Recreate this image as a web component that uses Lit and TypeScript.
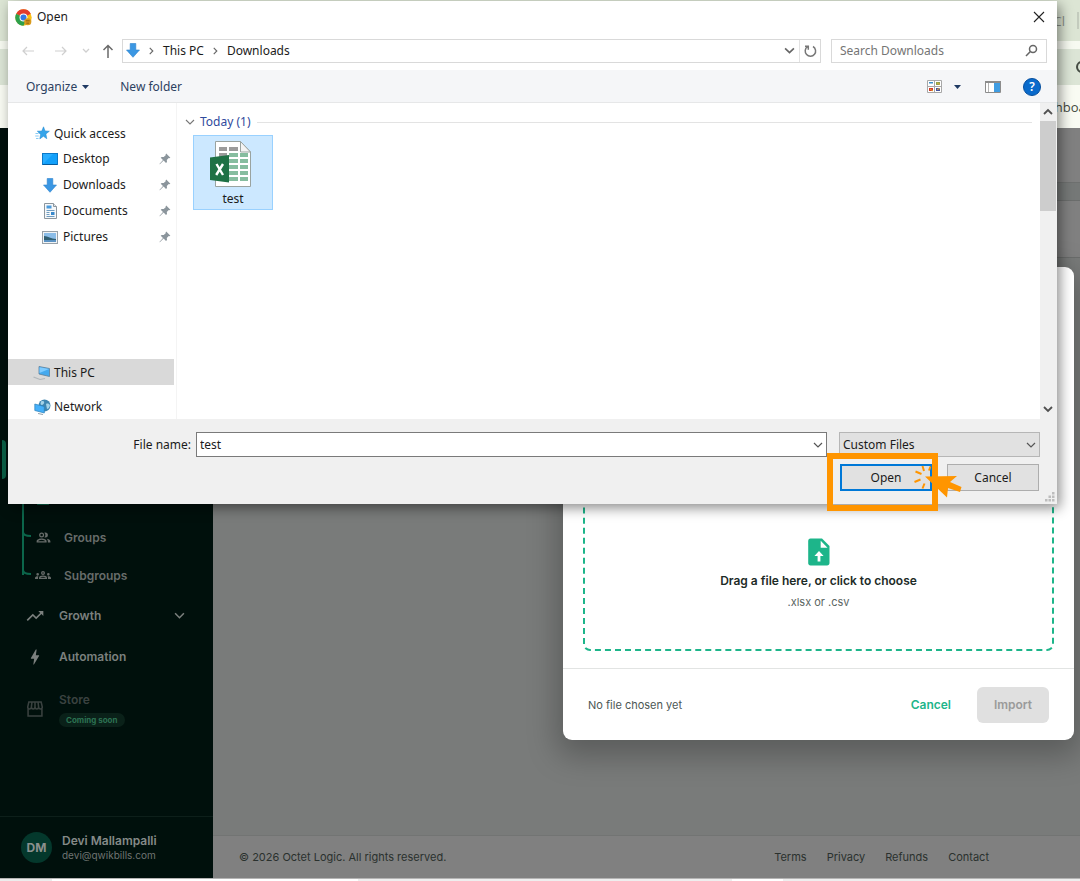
import { LitElement, html, css } from "lit";
import { customElement } from "lit/decorators.js";

const chevronDown = (size = 10, w = 1.2) => html`<svg width=${size} height=${size} viewBox="0 0 10 10" fill="none" stroke="currentColor" stroke-width=${w}><path d="M1 3l4 4 4-4" /></svg>`;
const chevronUp = () => html`<svg width="10" height="10" viewBox="0 0 10 10" fill="none" stroke="currentColor" stroke-width="1.8"><path d="M1 7l4-4 4 4" /></svg>`;
const chevronRight = () => html`<svg width="7" height="10" viewBox="0 0 8 10" fill="none" stroke="#666" stroke-width="1.3"><path d="M2 1.500l3.500 3.500L2 8.500" /></svg>`;
const downArrow = () => html`<svg width="14" height="15" viewBox="0 0 14 15"><path d="M4.200.5h5.600v6.500h3.700L7 14.300.5 7h3.700z" fill="#3b97e3" stroke="#2c83cf" stroke-width=".6" /></svg>`;
const pin = () => html`<svg width="12" height="12" viewBox="0 0 12 12" fill="#8b959c"><path d="M7.200.6l4.200 4.200-1.200.4-.5-.1-1.900 1.900.2 2-1 .9-2.400-2.400L.8 11.300.4 11l3.600-4L1.700 4.800l1-.9 2 .2 2-1.900-.1-.6z" /></svg>`;

const icons: Record<string, unknown> = {
  star: html`<svg width="15" height="15" viewBox="0 0 15 15"><path d="M8.500.8l1.600 4.100 4.300.3-3.500 2.700.9 4.800-3.400-2.400-3.600 2.600.8-4.500L2.300 5.200l4.500-.2z" fill="#35a4ea" stroke="#1f86cf" stroke-width=".5" /><path d="M.5 7.500h3M.2 10h3.500M1 12.500h2.500" stroke="#7cc4f2" stroke-width=".9" /></svg>`,
  desktop: html`<svg width="16" height="13" viewBox="0 0 16 13"><rect x=".5" y=".5" width="15" height="11" fill="#12a0fa" stroke="#0b78c8" /><path d="M1 11L11 1H1z" fill="#29adff" /><path d="M1 11.500h14" stroke="#075b9c" /></svg>`,
  downloads: downArrow(),
  documents: html`<svg width="13" height="16" viewBox="0 0 13 16"><path d="M.5.5h9l3 3v12H.5z" fill="#f6f8fa" stroke="#8c969e" /><path d="M9.500.5v3h3" fill="#dfe5ea" stroke="#8c969e" /><path d="M2.500 2.500h5v3h-5z" fill="#4a9bdd" /><path d="M2.500 7.500h8M2.500 9.500h3M2.500 11.500h3M2.500 13.500h8" stroke="#6f9cc0" /><path d="M7 9h3.500v3H7z" fill="#3989cc" /></svg>`,
  pictures: html`<svg width="16" height="13" viewBox="0 0 16 13"><rect x=".5" y=".5" width="15" height="12" fill="#f1f3f5" stroke="#98a1a8" /><path d="M2 2h12v9H2z" fill="#8bbde8" /><path d="M2 5c4 0 7 3 12 3v3H2z" fill="#315f72" /><path d="M2 9h12v2H2z" fill="#5b93c4" /></svg>`,
  pc: html`<svg width="18" height="16" viewBox="0 0 18 16"><path d="M6 1.500l10.500 2v8L6 9z" fill="#45a9ee" stroke="#5c7f99" stroke-width=".8" /><path d="M6.500 2.200l9.500 1.800-9.500 4z" fill="#7ecbff" /><path d="M.5 12l6.500 2.500 5-1" stroke="#b0b6ba" stroke-width="1.200" fill="none" /></svg>`,
  network: html`<svg width="17" height="16" viewBox="0 0 17 16"><circle cx="10.500" cy="6.500" r="6" fill="#3f86b0" /><path d="M7 2.500c3-1.500 4 1 2.500 2.500s-2 1-3 0zM12 5c2-1 3 0 4 1-.5 3-2 4-3 4z" fill="#a5d3e8" /><path d="M.8 5l9.500 2.500v6.500L.8 11.500z" fill="#45b0fa" stroke="#2b7fb9" stroke-width=".7" /><path d="M4 14.500l5 1" stroke="#8fa0ab" /></svg>`,
};

const people = html`<svg width="15" height="15" viewBox="0 0 24 24" fill="currentColor"><path d="M9 12a4 4 0 1 0 0-8 4 4 0 0 0 0 8zm0-6a2 2 0 1 1 0 4 2 2 0 0 1 0-4zM9 13.500c-3 0-8 1.400-8 4.300V20h16v-2.200c0-2.900-5-4.300-8-4.300zM3.200 18c.6-1 3.300-2.300 5.800-2.300s5.200 1.200 5.800 2.300zM15 12a4 4 0 1 0 0-8c-.6 0-1.100.1-1.600.3a5.500 5.500 0 0 1 0 7.400c.5.200 1 .3 1.600.3zM17 13.800c1.300 1 2 2.300 2 4V20h4v-2.200c0-2.300-3.200-3.600-6-4z" /></svg>`;
const groups = html`<svg width="16" height="16" viewBox="0 0 24 24" fill="currentColor"><path d="M4 13a2 2 0 1 0 0-4 2 2 0 0 0 0 4zm1.100 1.100A6.300 6.300 0 0 0 4 14c-1 0-1.900.2-2.800.6A2 2 0 0 0 0 16.400V18h4.500v-1.600c0-.8.200-1.600.6-2.300zM20 13a2 2 0 1 0 0-4 2 2 0 0 0 0 4zm4 3.400a2 2 0 0 0-1.200-1.800c-.9-.4-1.800-.6-2.800-.6-.4 0-.8 0-1.100.1.400.7.600 1.500.6 2.300V18H24zm-7.800-2.800c-1.200-.5-2.600-.9-4.200-.9s-3 .4-4.200.9A3 3 0 0 0 6 16.400V18h12v-1.600a3 3 0 0 0-1.800-2.800zM8.100 16c.1-.2.100-.4.900-.7a8 8 0 0 1 6 0c.8.300.8.500.9.700zM12 6a3 3 0 1 0 0 6 3 3 0 0 0 0-6zm0 4a1 1 0 1 1 0-2 1 1 0 0 1 0 2z" /></svg>`;
const trend = html`<svg width="20" height="20" viewBox="0 0 24 24" fill="currentColor"><path d="M16 6l2.300 2.300-4.900 4.900-4-4L2 16.600 3.400 18l6-6 4 4 6.300-6.300L22 12V6z" /></svg>`;
const bolt = html`<svg width="20" height="20" viewBox="0 0 24 24" fill="currentColor"><path d="M10.700 21H10l1-7H7.500c-.6 0-.6-.3-.4-.7L13 3h1l-1 7h3.500c.5 0 .6.300.5.600z" /></svg>`;
const store = html`<svg width="20" height="20" viewBox="-1 -1 26 26" fill="none" stroke="currentColor" stroke-width="2"><path d="M3 12v9h18v-9M4 3h16l1.500 6.500c0 1.500-1 2.500-2.300 2.500S17 11 16.700 9.500c0 1.500-1 2.500-2.300 2.500S12 11 12 9.500c0 1.500-1 2.500-2.300 2.500S7.300 11 7.300 9.500C7 11 6 12 4.800 12S2.500 11 2.500 9.500zM7.300 9.500L8 3M12 9.500V3M16.700 9.500L16 3" /></svg>`;

/* Web page behind the dialogs: browser strip, sidebar, content, footer. */
@customElement("backdrop-page")
class BackdropPage extends LitElement {
  static styles = css`
    :host { display: flex; flex-direction: column; min-height: 100vh; font-family: Inter, sans-serif; }
    * { box-sizing: border-box; }
    .tabs { height: 41px; background: #dce5d4; display: flex; justify-content: flex-end; align-items: center; gap: 12px; padding-right: 1px; font: 13px "Open Sans", sans-serif; color: #8a9088; }
    .tick { width: 2px; height: 17px; background: #c3cbbd; }
    .address { height: 44px; background: #dce5d6; border-top: 8px solid #f7faf1; display: flex; justify-content: flex-end; align-items: center; overflow: hidden; }
    .round { width: 12px; height: 12px; border: 2px solid #444b42; border-radius: 50%; margin-right: -8px; }
    .marks { height: 43px; background: #f9fbf3; display: flex; justify-content: flex-end; align-items: center; font: 13px "Open Sans", sans-serif; color: #444a40; overflow: hidden; }
    .marks span { margin-right: -19px; }
    .work { flex: 1; display: flex; }
    .side { width: 213px; background: #00100c; color: #7b807e; display: flex; flex-direction: column; }
    nav { flex: 1; display: flex; flex-direction: column; justify-content: flex-end; padding-bottom: 75px; font-size: 12px; font-weight: 600; }
    .active { height: 40px; padding: 0 2px; }
    .marker { display: block; width: 4px; height: 39px; border-radius: 0 4px 4px 0; background: #0a5f46; }
    .sub { height: 38px; display: flex; align-items: center; color: #676c6a; text-decoration: none; margin-left: 22px; }
    .elbow { width: 12px; height: 38px; display: block; color: #0b664b; }
    .sub .glyph { width: 18px; display: flex; justify-content: center; }
    .sub .name { margin-left: 12px; }
    .green { color: #0b664b; }
    .item { height: 41px; display: flex; align-items: center; color: inherit; text-decoration: none; padding: 0 28px 0 25px; }
    .subs { margin-bottom: 1px; }
    .item .name { margin-left: 14px; flex: 1; }
    .shop { height: 64px; color: #3a4240; }
    .shop .name { display: flex; flex-direction: column; align-items: flex-start; gap: 6px; }
    .soon { font-size: 8px; font-weight: 700; line-height: 14px; border-radius: 7px; background: #0a2119; color: #2c7252; padding: 0 7px; }
    .user { height: 62px; border-top: 1px solid #0d1f1a; display: flex; align-items: center; gap: 10px; padding-left: 21px; }
    .avatar { width: 31px; height: 31px; border-radius: 50%; background: #04382c; display: grid; place-items: center; font-size: 12px; font-weight: 700; color: #8b908e; }
    .who { font-size: 12px; font-weight: 600; line-height: 14px; color: #858a88; }
    .mail { font-size: 10px; line-height: 14px; color: #6f7472; }
    .main { flex: 1; display: flex; flex-direction: column; background: #797b7a; }
    .head { height: 55px; background: #808080; border-bottom: 1px solid #6e706f; }
    .gap { height: 18px; background: #757877; border-bottom: 1px solid #6b6d6c; }
    .panel { height: 57px; background: #808080; border-bottom: 1px solid #6b6d6c; }
    .fill { flex: 1; }
    footer { height: 43px; background: #808080; border-top: 1px solid #727473; display: flex; align-items: center; justify-content: space-between; padding: 0 91px 0 26px; font-size: 11px; color: #2a312e; }
    footer div { display: flex; gap: 20px; }
    footer a { color: inherit; text-decoration: none; }
    .bar { height: 3px; border-top: 1px solid #b4b4b4; background: linear-gradient(90deg, #ececec 52px, #fff 52px 358px, #eee 358px 732px, #fff 732px 783px, #eee 783px); }
  `;
  sub(glyph: unknown, name: string, last = false) {
    return html`<a class="sub" href="#" aria-label=${name || "Clients"}>
      <svg class="elbow" viewBox="0 0 12 38" fill="none" stroke="currentColor" stroke-width="2"><path d=${last ? "M1 0v19" : "M1 0v38"} /><path d="M1 14c0 3 3 4 8 4" /></svg>
      <span class="glyph">${glyph}</span>${name ? html`<span class="name">${name}</span>` : ""}</a>`;
  }
  render() {
    return html`
      <div class="tabs"><span>Cl</span><i class="tick"></i></div>
      <div class="address"><i class="round"></i></div>
      <div class="marks"><span>hboard</span></div>
      <div class="work">
        <aside class="side">
          <nav>
            <div class="active"><i class="marker"></i></div>
            <div class="subs">
              ${this.sub(html`<svg class="green" width="12" height="12" viewBox="0 0 12 12" fill="currentColor"><circle cx="6" cy="3" r="3" /><path d="M0 12c0-6 12-6 12 0z" /></svg>`, "")}
              ${this.sub(people, "Groups")}
              ${this.sub(groups, "Subgroups", true)}
            </div>
            <a class="item" href="#">${trend}<span class="name">Growth</span>${chevronDown(11, 1.4)}</a>
            <a class="item" href="#">${bolt}<span class="name">Automation</span></a>
            <a class="item shop" href="#">${store}<span class="name">Store<span class="soon">Coming soon</span></span></a>
          </nav>
          <div class="user"><span class="avatar">DM</span><div><div class="who">Devi Mallampalli</div><div class="mail">devi@qwikbills.com</div></div></div>
        </aside>
        <div class="main">
          <div class="head"></div><div class="gap"></div><div class="panel"></div>
          <div class="fill"></div>
          <footer><span>© 2026 Octet Logic. All rights reserved.</span>
            <div><a href="#">Terms</a><a href="#">Privacy</a><a href="#">Refunds</a><a href="#">Contact</a></div></footer>
        </div>
      </div>
      <div class="bar"></div>`;
  }
}

/* Import card with the drop zone. */
@customElement("import-card")
class ImportCard extends LitElement {
  static styles = css`
    :host { display: block; background: #fff; border-radius: 9px; box-shadow: 0 10px 30px 6px rgba(0, 0, 0, 0.25); font-family: Inter, sans-serif; }
    * { box-sizing: border-box; }
    .body { padding: 228px 20px 17px; }
    .zone { display: flex; flex-direction: column; align-items: center; border: 2px dashed #1db58a; border-radius: 7px; padding: 41px 0 38px; }
    .title { margin-top: 5px; font-size: 12px; font-weight: 600; line-height: 20px; color: #1d2b27; }
    .kinds { margin-top: 2px; font-size: 11px; line-height: 18px; color: #5a6562; }
    .foot { border-top: 1px solid #e2e4e3; height: 72px; display: flex; align-items: center; padding: 0 25px; }
    .state { flex: 1; font-size: 11px; color: #4c5754; }
    button { font: 600 12px Inter, sans-serif; height: 36px; border: 0; border-radius: 6px; background: none; }
    .cancel { color: #1db58a; padding: 0 10px; margin-right: 16px; }
    .import { background: #e0e0e0; color: #9a9a9a; width: 72px; padding: 0; }
  `;
  render() {
    return html`
      <div class="body"><div class="zone">
        <svg width="22" height="28" viewBox="0 0 22 28"><path d="M2.500.5H14l7.500 7.500v17c0 1.400-1 2.500-2.500 2.500H2.500C1 27.500.2 26.400.2 25V3C.2 1.500 1 .5 2.500.5z" fill="#1db58a" /><path d="M12.700 2.700v7h6.800z" fill="#fff" /><path d="M11 13l-4.600 5h3.200v5.500h2.800V18h3.200z" fill="#fff" /></svg>
        <div class="title">Drag a file here, or click to choose</div>
        <div class="kinds">.xlsx or .csv</div>
      </div></div>
      <div class="foot"><span class="state">No file chosen yet</span><button class="cancel">Cancel</button><button class="import" disabled>Import</button></div>`;
  }
}

/* System file picker. */
@customElement("file-dialog")
class FileDialog extends LitElement {
  static styles = css`
    :host { display: block; background: #fff; box-shadow: 3px 4px 12px rgba(0, 0, 0, 0.45); font: 12px/16px "Noto Sans", "Open Sans", sans-serif; color: #1b1b1b; }
    * { box-sizing: border-box; }
    svg { display: block; flex: none; }
    button, input, select { font: inherit; color: inherit; margin: 0; border-radius: 0; }
    .plain { border: 0; background: none; padding: 0; display: flex; align-items: center; }
    .caption { height: 32px; display: flex; align-items: center; gap: 5px; padding: 0 12px 0 7px; }
    .caption b { flex: 1; font-weight: 400; }
    .where { height: 37px; display: flex; align-items: center; padding: 0 10px 2px 14px; }
    .arrows { display: flex; align-items: center; width: 100px; }
    .path { flex: 1; height: 24px; border: 1px solid #d9d9d9; display: flex; align-items: center; padding-left: 3px; color: #1b1b1b; }
    .path .crumb { margin: 0 8px; }
    .path .spring { flex: 1; }
    .path .more { color: #666; }
    .refresh { width: 21px; height: 22px; border-left: 1px solid #e2e2e2; justify-content: center; margin-left: 4px; }
    .search { width: 216px; height: 24px; border: 1px solid #d9d9d9; margin-left: 10px; display: flex; align-items: center; padding: 0 8px; }
    .search input { flex: 1; min-width: 0; border: 0; padding: 0; outline: 0; background: none; }
    .search input::placeholder { color: #757575; opacity: 1; }
    .tools { height: 33px; background: #f5f6f8; border-bottom: 1px solid #e6e7e8; display: flex; align-items: center; padding: 1px 16px 0 18px; color: #2c4161; }
    .tools .organize { gap: 5px; margin-right: 31px; }
    .tools .spring { flex: 1; }
    .tools .views { margin-right: 12px; }
    .tools .drop { margin-right: 24px; }
    .tools .pane { margin-right: 22px; }
    .help { width: 18px; height: 18px; border-radius: 50%; background: #0a6acb; border: 1px solid #064f9e; color: #fff; font-weight: 600; font-size: 12px; justify-content: center; }
    .content { display: flex; height: 316px; }
    .tree { width: 169px; border-right: 1px solid #f4f4f4; padding-top: 17px; }
    .row { height: 26px; display: flex; align-items: center; width: 166px; }
    .row .glyph { width: 20px; display: flex; justify-content: center; }
    .top { padding: 1px 0 0 24px; }
    .top .label { margin-left: 2px; }
    .kid { padding: 0 3px 0 32px; }
    .kid .label { margin-left: 3px; flex: 1; }
    .pc { background: #d9d9d9; margin: 109px 0 8px; }
    .files { flex: 1; padding: 10px 8px 0 8px; }
    .group { display: flex; align-items: center; height: 18px; gap: 5px; color: #2f4a9d; }
    .group svg { color: #777; }
    .group i { flex: 1; height: 1px; background: #e3e3e3; margin-left: 1px; }
    .tile { width: 80px; height: 75px; margin: 4px 0 0 8px; background: #cce8ff; border: 1px solid #99d1ff; display: flex; flex-direction: column; align-items: center; padding-top: 4px; }
    .tile svg { margin-right: 6px; }
    .tile span { margin-top: 3px; }
    .scroll { width: 17px; background: #f0f0f0; display: flex; flex-direction: column; align-items: center; justify-content: space-between; padding: 4px 1px 5px 0; color: #505050; }
    .scroll .thumb { width: 16px; height: 90px; background: #cdcdcd; margin: 4px 0 auto; }
    .bottom { background: #f0f0f0; padding: 13px 17px 0 0; height: 85px; }
    .fields { display: flex; align-items: center; }
    .fields label { width: 183px; text-align: right; margin-right: 5px; }
    .combo { flex: 1; height: 25px; border: 1px solid #7a7a7a; background: #fff; display: flex; align-items: center; padding-right: 3px; color: #555; }
    .combo input { flex: 1; min-width: 0; border: 0; outline: 0; background: none; padding: 0 3px; color: #1b1b1b; }
    .kind { width: 201px; height: 25px; margin-left: 12px; display: grid; align-items: center; color: #555; }
    .kind select { grid-area: 1 / 1; appearance: none; width: 100%; height: 25px; border: 1px solid #b6b6b6; background: #e1e1e1; padding: 0 3px; color: #1b1b1b; }
    .kind svg { grid-area: 1 / 1; justify-self: end; margin-right: 4px; pointer-events: none; }
    .actions { display: flex; justify-content: flex-end; gap: 15px; margin-top: 7px; padding-right: 1px; }
    .actions button { width: 92px; height: 27px; background: #e1e1e1; border: 1px solid #adadad; padding: 0; }
    .actions .open { border: 2px solid #0078d7; }
    .spot { position: relative; }
    .frame { position: absolute; inset: -11px -6px -20px -13px; border: 6px solid #ff9500; pointer-events: none; }
    .cursor { position: absolute; left: 72px; top: -1px; pointer-events: none; }
    .grip { position: absolute; right: 2px; bottom: 2px; }
  `;
  render() {
    const kids = [["desktop", "Desktop"], ["downloads", "Downloads"], ["documents", "Documents"], ["pictures", "Pictures"]];
    return html`
      <div class="caption">
        <svg width="17" height="17" viewBox="0 0 18 18"><circle cx="9" cy="9" r="8.700" fill="#fbc116" /><path d="M9 9L1.300 5A8.700 8.700 0 0 1 16.700 5z" fill="#e33b2e" /><path d="M9 9L1.300 4.900A8.700 8.700 0 0 0 9 17.700l3-5.500z" fill="#2da04c" /><circle cx="9" cy="9" r="4.200" fill="#fff" /><circle cx="9" cy="9" r="3.200" fill="#3478e8" /><circle cx="13.500" cy="13.500" r="3.800" fill="#d99a1c" /><path d="M11.500 12.500h4M12 15h3" stroke="#8d5c0c" /></svg>
        <b>Open</b>
        <button class="plain" aria-label="Close"><svg width="12" height="12" viewBox="0 0 12 12" stroke="#222" stroke-width="1.100"><path d="M1 1l10 10M11 1L1 11" /></svg></button>
      </div>
      <div class="where">
        <div class="arrows">
          <svg width="12" height="10" viewBox="0 0 12 10" fill="none" stroke="#cfcfcf" stroke-width="1.200"><path d="M12 5H1M5 1L1 5l4 4" /></svg>
          <svg width="34" height="10" viewBox="0 0 34 10" fill="none" stroke="#cfcfcf" stroke-width="1.200"><path d="M21 5h11M28 1l4 4-4 4" /></svg>
          <svg width="27" height="8" viewBox="0 0 27 8" fill="none" stroke="#cfcfcf" stroke-width="1.300"><path d="M15 2l3 3 3-3" /></svg>
          <svg width="20" height="14" viewBox="0 0 20 14" fill="none" stroke="#6a6a6a" stroke-width="1.500"><path d="M13 14V2M8.500 6L13 1.500 17.500 6" /></svg>
        </div>
        <div class="path">${downArrow()}<span class="crumb">${chevronRight()}</span><span>This PC</span><span class="crumb">${chevronRight()}</span><span>Downloads</span><span class="spring"></span>
          <span class="more">${chevronDown(11, 1.5)}</span>
          <button class="plain refresh" aria-label="Refresh"><svg width="13" height="14" viewBox="0 0 13 14" fill="none" stroke="#777" stroke-width="1.500"><path d="M9 2.500A5.200 5.200 0 1 1 3.500 2.700M1 2.200h3.300v3.500" /></svg></button></div>
        <div class="search"><input type="text" placeholder="Search Downloads" aria-label="Search Downloads" /><svg width="13" height="13" viewBox="0 0 13 13" fill="none" stroke="#666" stroke-width="1.500"><circle cx="8" cy="5" r="3.500" /><path d="M5.400 7.500L1 12" /></svg></div>
      </div>
      <div class="tools">
        <button class="plain organize">Organize<svg width="7" height="4" viewBox="0 0 7 4" fill="#1f3a63"><path d="M0 0h7L3.500 4z" /></svg></button>
        <button class="plain">New folder</button>
        <span class="spring"></span>
        <svg class="views" width="15" height="13" viewBox="0 0 15 13"><path d="M.5.5h14v12H.5zM7.500 0v13M0 6.500h15" fill="#fff" stroke="#a8a8a8" /><path d="M2 2h4v1.500H2z" fill="#3b8fc6" /><path d="M9 2h4v3H9z" fill="#8da34d" /><path d="M2 8h4v3H2z" fill="#d33a26" /><path d="M9 8h4v3H9z" fill="#46539d" /><path d="M10 3l3 1.500M3 9l3 2M10 9.500l3-1" stroke="#e5a63c" /></svg>
        <svg class="drop" width="7" height="4" viewBox="0 0 7 4" fill="#1f3a63"><path d="M0 0h7L3.500 4z" /></svg>
        <svg class="pane" width="16" height="12" viewBox="0 0 16 12"><path d="M.5.5h15v11H.5z" fill="#fff" stroke="#8c8c8c" /><path d="M0 0h16v2H0z" fill="#8c8c8c" /><path d="M3.500 2v9" stroke="#b5b5b5" /><path d="M9 2h6v9H9z" fill="#409de2" /></svg>
        <button class="plain help" aria-label="Help">?</button>
      </div>
      <div class="content">
        <div class="tree">
          <div class="row top"><span class="glyph">${icons.star}</span><span class="label">Quick access</span></div>
          ${kids.map(([k, n]) => html`<div class="row kid"><span class="glyph">${icons[k]}</span><span class="label">${n}</span>${pin()}</div>`)}
          <div class="row top pc"><span class="glyph">${icons.pc}</span><span class="label">This PC</span></div>
          <div class="row top"><span class="glyph">${icons.network}</span><span class="label">Network</span></div>
        </div>
        <div class="files">
          <div class="group">${chevronDown(10, 1.1)}<span>Today (1)</span><i></i></div>
          <div class="tile">
            <svg width="42" height="48" viewBox="0 0 42 48"><path d="M6.500 1.500h25L41.500 12v34.500h-35z" fill="#fff" stroke="#9aa3a0" /><path d="M31.500 1.500V12h10z" fill="#f4f4f4" stroke="#9aa3a0" /><path d="M10 7h8v4h-8zM20 7h9v4h-9zM10 13h8v4h-8z" fill="#9b9b9b" /><path d="M20 13h9v4h-9zM31 13h8v4h-8zM20 19h9v4h-9zM31 19h8v4h-8zM20 25h9v4h-9zM31 25h8v4h-8zM20 31h9v4h-9zM31 31h8v4h-8zM20 37h9v4h-9zM31 37h8v4h-8z" fill="#86bd9f" /><path d="M1 17.500L20 15v27.500L1 40z" fill="#1e7145" /><path d="M7.500 24l6.500 11M14 24L7.200 35" stroke="#fff" stroke-width="2.400" /></svg>
            <span>test</span>
          </div>
        </div>
        <div class="scroll">${chevronUp()}<i class="thumb"></i>${chevronDown(10, 1.8)}</div>
      </div>
      <div class="bottom">
        <div class="fields">
          <label for="name">File name:</label>
          <div class="combo"><input id="name" type="text" value="test" />${chevronDown(10, 1.2)}</div>
          <div class="kind"><select aria-label="File type"><option>Custom Files</option></select>${chevronDown(10, 1.2)}</div>
        </div>
        <div class="actions">
          <div class="spot"><button class="open">Open</button><i class="frame"></i>
            <svg class="cursor" width="50" height="36" viewBox="0 0 50 36"><path d="M13 13.500L45 13l-7 6 11.500 5-1.500 5-12-4-1 9.500z" fill="#ff9500" /><path d="M3.500 8.500l6 2.500M10.500 3l1.500 5M18.500 3.500L17 7.500M2.500 19l6-2.500M12.500 20.500l-2 5" stroke="#ff9500" stroke-width="2" /></svg>
          </div>
          <button>Cancel</button>
        </div>
      </div>
      <svg class="grip" width="10" height="10" viewBox="0 0 10 10" fill="#bdbdbd"><path d="M7 0h2.500v2.500H7zM7 3.500h2.500V6H7zM3.500 3.500H6V6H3.500zM7 7h2.500v2.500H7zM3.500 7H6v2.500H3.500zM0 7h2.500v2.500H0z" /></svg>`;
  }
}

@customElement("app-root")
class AppRoot extends LitElement {
  static styles = css`
    :host { display: block; position: relative; overflow: hidden; }
    .card { position: absolute; top: 267px; right: 6px; width: 511px; }
    .picker { position: absolute; top: 1px; left: 8px; right: 23px; }
  `;
  render() {
    return html`<backdrop-page></backdrop-page><import-card class="card"></import-card><file-dialog class="picker"></file-dialog>`;
  }
}
